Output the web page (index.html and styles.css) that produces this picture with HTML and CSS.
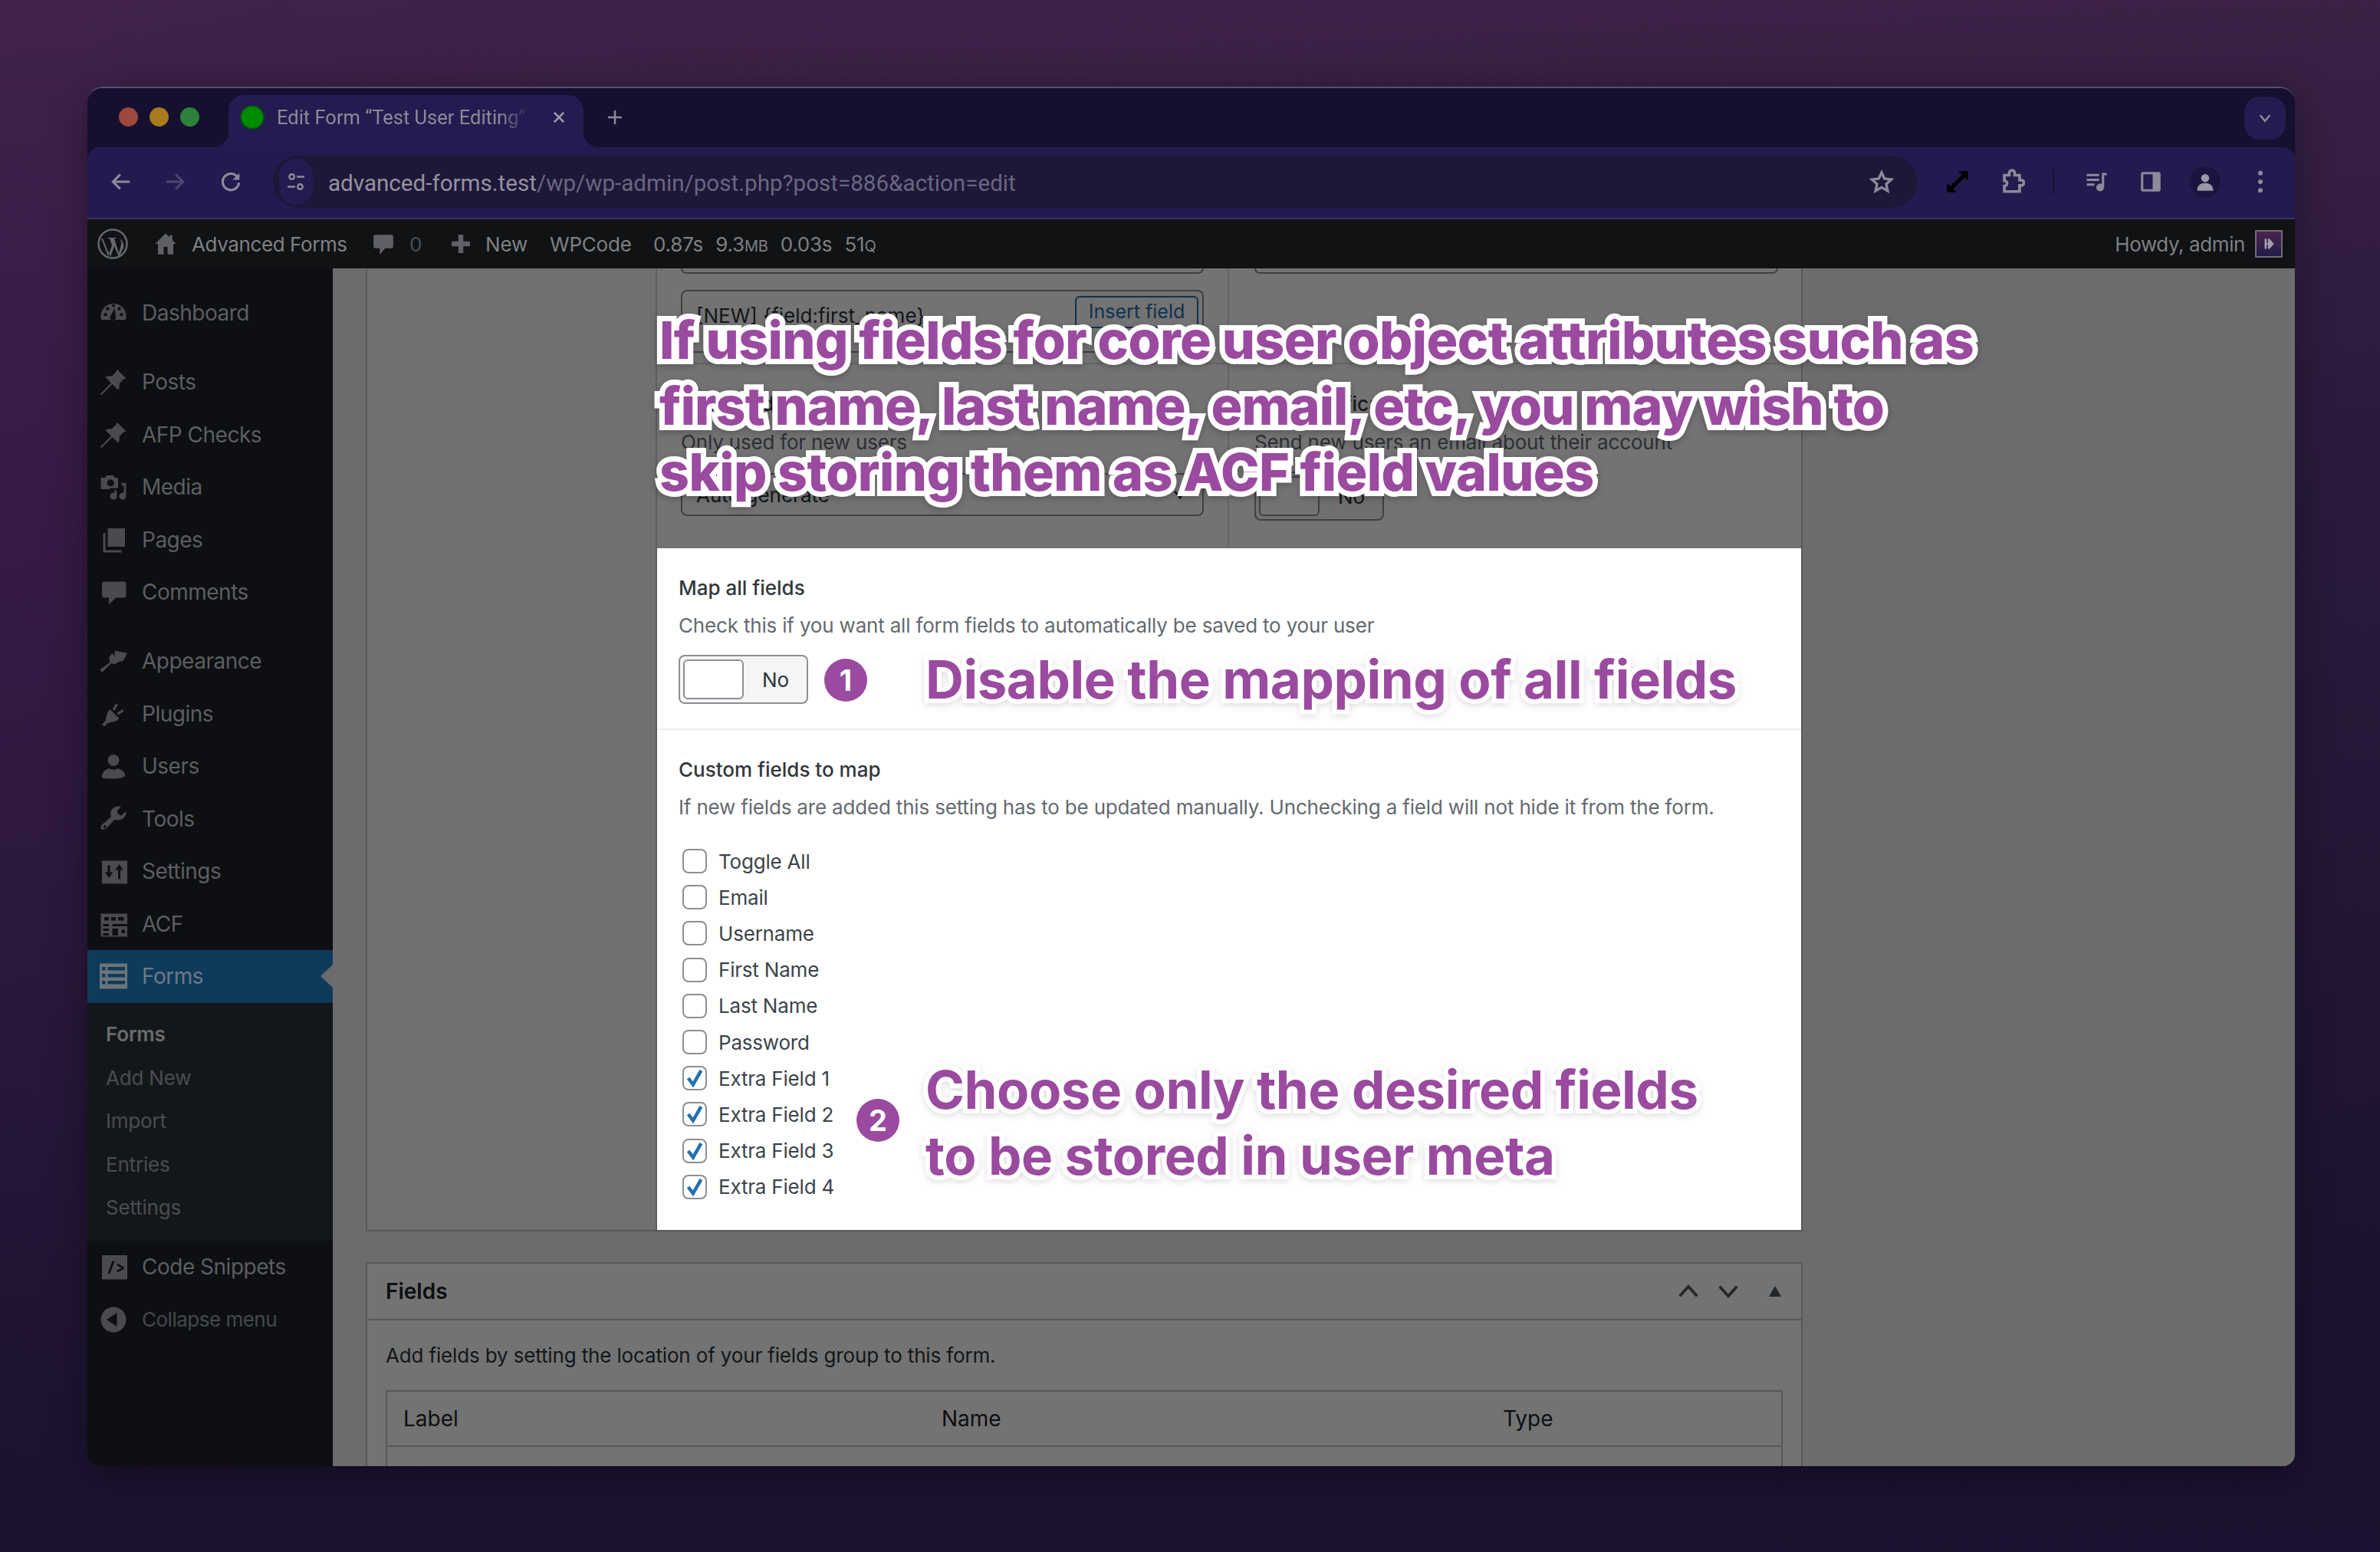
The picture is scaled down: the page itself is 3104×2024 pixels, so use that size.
FILE: index.html
```html
<!DOCTYPE html>
<html lang="en">
<head>
    <meta charset="UTF-8">
    <title>Edit Form "Test User Editing"</title>
    <link rel="stylesheet" href="styles.css">
</head>
<body>

<div class="window">

    <div class="tabstrip">
        <div class="lights">
            <span class="light red"></span>
            <span class="light yellow"></span>
            <span class="light green"></span>
        </div>
        <div class="tab">
            <span class="favicon"></span>
            <span class="tab-title">Edit Form “Test User Editing”</span>
            <svg class="tab-close" viewBox="0 0 16 16"><path d="M3 3l10 10M13 3L3 13"/></svg>
        </div>
        <svg class="new-tab" viewBox="0 0 24 24"><path d="M12 3v18M3 12h18"/></svg>
        <div class="tab-menu">
            <svg viewBox="0 0 16 16"><path d="M3 5l5 6 5-6"/></svg>
        </div>
    </div>

    <div class="toolbar">
        <svg class="tb-icon back" viewBox="0 0 24 24"><path d="M21 12H4M11 4.500L3.500 12l7.500 7.500"/></svg>
        <svg class="tb-icon forward" viewBox="0 0 24 24"><path d="M3 12h17M13 4.500l7.500 7.500-7.500 7.500"/></svg>
        <svg class="tb-icon reload" viewBox="0 0 24 24"><path d="M19.500 8A8.500 8.500 0 1 0 20.500 13"/><path class="solid" d="M21 3v7h-7z"/></svg>
        <div class="omnibox">
            <span class="tune">
                <svg viewBox="0 0 24 24"><circle cx="7" cy="6" r="3"/><path d="M13 6h9M2 18h9"/><circle cx="17" cy="18" r="3"/></svg>
            </span>
            <span class="url"><b>advanced-forms.test</b>/wp/wp-admin/post.php?post=886&amp;action=edit</span>
            <svg class="star" viewBox="0 0 24 24"><path d="M12 3l2.800 6 6.700.800-5 4.500 1.400 6.600L12 17.500 6.100 20.900l1.400-6.600-5-4.500 6.700-.800z"/></svg>
        </div>
        <svg class="tb-icon expand" viewBox="0 0 24 24"><path class="solid" d="M13 1h10v10l-3.500-3.500L7.500 19.500 11 23H1V13l3.500 3.500 12-12z"/></svg>
        <svg class="tb-icon puzzle" viewBox="0 0 24 24"><path d="M5 6h4.500V4a2.500 2.500 0 0 1 5 0v2H19v4.500h1.500a2.500 2.500 0 0 1 0 5H19V21H5v-5a2.500 2.500 0 0 0 0-5z"/></svg>
        <span class="tb-divider"></span>
        <svg class="tb-icon queue" viewBox="0 0 24 24"><path d="M2 5h13M2 10h13M2 15h8M19 18V4h4"/><circle class="solid" cx="16" cy="18" r="4"/></svg>
        <svg class="tb-icon panel" viewBox="0 0 24 24"><rect x="3" y="3" width="18" height="18" rx="1"/><path class="solid" d="M14 3h7v18h-7z"/></svg>
        <span class="avatar">
            <svg viewBox="0 0 24 24"><circle cx="12" cy="8" r="4.500"/><path d="M3 22c0-6 4-8.500 9-8.500s9 2.500 9 8.500z"/></svg>
        </span>
        <svg class="tb-icon kebab" viewBox="0 0 8 32"><circle cx="4" cy="4" r="3.200"/><circle cx="4" cy="16" r="3.200"/><circle cx="4" cy="28" r="3.200"/></svg>
    </div>

    <div class="adminbar">
        <svg class="wp-logo" viewBox="0 0 40 40">
            <circle cx="20" cy="20" r="18.500"/>
            <path class="wp-w" d="M5 13l9 23 5-14-3-9h-2v-1h11v1h-3l6 19 3-11c1-4-1-6-2-8 4 3 6 7 5 12l-6 12-6-14-5 14-10-24z"/>
        </svg>
        <svg class="ab-home" viewBox="0 0 24 24"><path d="M12 1L1 12h3v11h6v-8h4v8h6V12h3l-4-4V3h-3v2z"/></svg>
        <span class="ab-site">Advanced Forms</span>
        <svg class="ab-comment" viewBox="0 0 24 24"><path d="M3 2h18a2 2 0 0 1 2 2v11a2 2 0 0 1-2 2h-7l-6 7v-7H3a2 2 0 0 1-2-2V4a2 2 0 0 1 2-2z"/></svg>
        <span class="ab-count">0</span>
        <svg class="ab-plus" viewBox="0 0 24 24"><path d="M9 1h6v8h8v6h-8v8H9v-8H1V9h8z"/></svg>
        <span class="ab-new">New</span>
        <span class="ab-wpcode">WPCode</span>
        <span class="ab-stat first">0.87s</span>
        <span class="ab-stat">9.3<small>MB</small></span>
        <span class="ab-stat">0.03s</span>
        <span class="ab-stat">51<small>Q</small></span>
        <span class="ab-howdy">Howdy, admin</span>
        <span class="ab-avatar">
            <svg viewBox="0 0 20 20"><path d="M5 4h2.500v5H9V4l2 0 5 6-5 6H9v-5H7.500v5H5z"/></svg>
        </span>
    </div>

    <div class="wp-body">

        <nav class="sidebar">
            <a class="menu-item"><svg class="mi" viewBox="0 0 24 24"><path d="M12 4C5.400 4 1 9 1 15c0 1.200.200 2 .5 3h21c.3-1 .5-1.800.5-3 0-6-4.400-11-11-11zm-7 11a1.500 1.500 0 1 1 0-3 1.500 1.500 0 0 1 0 3zm2-5a1.500 1.500 0 1 1 0-3 1.500 1.500 0 0 1 0 3zm5-3a1.300 1.300 0 1 1 0-2.600A1.300 1.300 0 0 1 12 7zm2 9a2.500 2.500 0 0 1-5-.5L13 8zm3-6a1.500 1.500 0 1 1 0-3 1.500 1.500 0 0 1 0 3zm2 5a1.500 1.500 0 1 1 0-3 1.500 1.500 0 0 1 0 3z"/></svg>Dashboard</a>
            <span class="menu-sep"></span>
            <a class="menu-item"><svg class="mi" viewBox="0 0 24 24"><path d="M15 1l8 8-2 .5-4 4c.5 2.500 0 4-1 5.500L11 14 2 23l-1.500.5L1 22l9-9-5-5c1.500-1 3-1.500 5.500-1l4-4z"/></svg>Posts</a>
            <a class="menu-item"><svg class="mi" viewBox="0 0 24 24"><path d="M15 1l8 8-2 .5-4 4c.5 2.500 0 4-1 5.500L11 14 2 23l-1.500.5L1 22l9-9-5-5c1.500-1 3-1.500 5.500-1l4-4z"/></svg>AFP Checks</a>
            <a class="menu-item"><svg class="mi" viewBox="0 0 24 24"><path fill-rule="evenodd" d="M1 4h4l1-2h6l1 2h3v9H9.500a4 4 0 0 0-1 1H1zm8.500 1.500a3 3 0 1 0 0 6 3 3 0 0 0 0-6z"/><path d="M23 8.500V20a3 3 0 1 1-2-2.800V11h-2V8.500zM15 16v4a3 3 0 1 1-2-2.800V14z"/></svg>Media</a>
            <a class="menu-item"><svg class="mi" viewBox="0 0 24 24"><path d="M7 2h15v16H7z"/><path d="M3 6h2v15h14v2H3z"/></svg>Pages</a>
            <a class="menu-item"><svg class="mi" viewBox="0 0 24 24"><path d="M4 3h17a2 2 0 0 1 2 2v10a2 2 0 0 1-2 2h-7l-6 6v-6H4a2 2 0 0 1-2-2V5a2 2 0 0 1 2-2z"/></svg>Comments</a>
            <span class="menu-sep"></span>
            <a class="menu-item"><svg class="mi" viewBox="0 0 24 24"><path d="M13 3c3 .5 7 1.500 11 2-1 2-2 5-4 7-3 1-6 .5-7 .5z"/><path d="M11 5l5 8-3 2-3-1-7 7c-1.500 1-3-.5-2-2l8-6-1-4z"/></svg>Appearance</a>
            <a class="menu-item"><svg class="mi" viewBox="0 0 24 24"><path d="M9 8l8 8c-2 2-4 3-6 3l-4 1-3 3-2-2 3-3 1-4c0-2 1-4 3-6z"/><path d="M14 3l2 1-3 5-2-1zM20 8l1 2-5 3-1-2z"/></svg>Plugins</a>
            <a class="menu-item"><svg class="mi" viewBox="0 0 24 24"><circle cx="12" cy="7" r="5"/><path d="M2 22c0-5 3-7 6-8 2 1.500 6 1.500 8 0 3 1 6 3 6 6 0 2-5 3-10 3S2 23 2 22z"/></svg>Users</a>
            <a class="menu-item"><svg class="mi" viewBox="0 0 24 24"><path fill-rule="evenodd" d="M23 6c0 4-3 7-7 7-1 0-2 0-3-.5L6 20c-1.500 1.500-5 2-5 0 0-1 0-2 1-3l8-7c-.5-1-.5-2-.5-3 0-3 3-6 7-6l2 .5L15 5l1 3 3 1 3.500-3.500zM4.500 17.500a1.300 1.300 0 1 0 0 2.600 1.300 1.300 0 0 0 0-2.600z"/></svg>Tools</a>
            <a class="menu-item"><svg class="mi" viewBox="0 0 24 24"><path fill-rule="evenodd" d="M2 3h22v20H2zM7 7v6H4.500l3.500 5 3.500-5H9V7zm9 12h2V11h2.500L17 6l-3.500 5H16z"/></svg>Settings</a>
            <a class="menu-item"><svg class="mi" viewBox="0 0 24 24"><path fill-rule="evenodd" d="M1 3h23v20H1zm3 3v3h4V6zm6 0v3h4V6zm6 0v3h5V6zM3 12v2h5v-2zm0 4v2h5v-2zm8-4v2h13v-2zm0 4v6h5v-6zm8 1v3h3v-3zM3 20v2h5v-2z"/></svg>ACF</a>
            <a class="menu-item active"><svg class="mi" viewBox="0 0 24 24"><path fill-rule="evenodd" d="M0 1h24v22H0zm2 3v3h3V4zm5 0v3h15V4zM2 10v3h3v-3zm5 0v3h15v-3zM2 16v3h3v-3zm5 0v3h15v-3z"/></svg>Forms<span class="menu-arrow"></span></a>
            <div class="submenu">
                <a class="sub-item current">Forms</a>
                <a class="sub-item">Add New</a>
                <a class="sub-item">Import</a>
                <a class="sub-item">Entries</a>
                <a class="sub-item">Settings</a>
            </div>
            <a class="menu-item snippets"><svg class="mi" viewBox="0 0 24 24"><path fill-rule="evenodd" d="M2 2h22v21H2zm9 5L7 18h2l4-11zm4 2v2l4 2-4 2v2l6-3v-2z"/></svg>Code Snippets</a>
            <a class="menu-item collapse"><svg class="mi" viewBox="0 0 24 24"><path fill-rule="evenodd" d="M12 1a11 11 0 1 1 0 22 11 11 0 0 1 0-22zm3 5l-9 6 9 6z"/></svg>Collapse menu</a>
        </nav>

        <main class="main">
            <div class="dim"></div>

            <section class="postbox settings-box">
                <div class="tabs-col"></div>
                <div class="fields-col">
                    <div class="field-row first-row">
                        <div class="cell">
                            <div class="input clipped"></div>
                            <div class="input subject">
                                <span>[NEW] {field:first_name}</span>
                                <span class="insert-btn">Insert field</span>
                            </div>
                        </div>
                        <div class="cell">
                            <div class="input clipped"></div>
                        </div>
                    </div>
                    <div class="field-row second-row">
                        <div class="cell">
                            <div class="f-label">Password</div>
                            <div class="f-desc">Only used for new users</div>
                            <div class="input select">
                                <span>Auto generate</span>
                                <svg class="select-arrow" viewBox="0 0 16 16"><path d="M3 5l5 6 5-6"/></svg>
                            </div>
                        </div>
                        <div class="cell">
                            <div class="f-label">Send notification</div>
                            <div class="f-desc">Send new users an email about their account</div>
                            <div class="toggle">
                                <span class="knob"></span>
                                <span class="toggle-text">No</span>
                            </div>
                        </div>
                    </div>

                    <div class="highlight">
                        <div class="hl-section map-all">
                            <div class="f-label">Map all fields</div>
                            <div class="f-desc">Check this if you want all form fields to automatically be saved to your user</div>
                            <div class="toggle">
                                <span class="knob"></span>
                                <span class="toggle-text">No</span>
                            </div>
                        </div>
                        <div class="hl-section custom-fields">
                            <div class="f-label">Custom fields to map</div>
                            <div class="f-desc">If new fields are added this setting has to be updated manually. Unchecking a field will not hide it from the form.</div>
                            <ul class="checks">
                                <li><span class="cb"></span>Toggle All</li>
                                <li><span class="cb"></span>Email</li>
                                <li><span class="cb"></span>Username</li>
                                <li><span class="cb"></span>First Name</li>
                                <li><span class="cb"></span>Last Name</li>
                                <li><span class="cb"></span>Password</li>
                                <li><span class="cb on"><svg viewBox="0 0 20 20"><path d="M4 10l4.500 6L16 3"/></svg></span>Extra Field 1</li>
                                <li><span class="cb on"><svg viewBox="0 0 20 20"><path d="M4 10l4.500 6L16 3"/></svg></span>Extra Field 2</li>
                                <li><span class="cb on"><svg viewBox="0 0 20 20"><path d="M4 10l4.500 6L16 3"/></svg></span>Extra Field 3</li>
                                <li><span class="cb on"><svg viewBox="0 0 20 20"><path d="M4 10l4.500 6L16 3"/></svg></span>Extra Field 4</li>
                            </ul>
                        </div>
                    </div>
                </div>
            </section>

            <section class="postbox fields-box">
                <div class="fb-head">
                    <span class="fb-title">Fields</span>
                    <svg class="fb-chev" viewBox="0 0 24 24"><path d="M3 17l9-10 9 10"/></svg>
                    <svg class="fb-chev" viewBox="0 0 24 24"><path d="M3 7l9 10 9-10"/></svg>
                    <span class="fb-tri"></span>
                </div>
                <div class="fb-body">
                    <p class="fb-note">Add fields by setting the location of your fields group to this form.</p>
                    <div class="fb-table">
                        <div class="fb-row">
                            <span class="col-label">Label</span>
                            <span class="col-name">Name</span>
                            <span class="col-type">Type</span>
                        </div>
                    </div>
                </div>
            </section>
        </main>
    </div>

    <!-- annotations drawn on top of the screenshot -->
    <div class="note note-top">If using fields for core user object attributes such as<br><span class="tight">first name, last name, email, etc, you may wish to</span><br>skip storing them as ACF field values</div>
    <div class="note note-one">Disable the mapping of all fields</div>
    <div class="note note-two">Choose only the desired fields<br>to be stored in user meta</div>
    <span class="step step-one">1</span>
    <span class="step step-two">2</span>
</div>

</body>
</html>
```
FILE: styles.css
```css
* {
    box-sizing: border-box;
}

html, body {
    margin: 0;
    height: 2024px;
    overflow: hidden;
}

body {
    padding: 113px 111px 112px 114px;
    background:
        radial-gradient(900px 1400px at 0 30%, rgba(80, 30, 90, .3), transparent),
        linear-gradient(178deg, #3d2347 0%, #2c1a3d 30%, #1d1330 80%, #1a1230 100%);
    font-family: "Inter", "Liberation Sans", sans-serif;
    font-size: 26px;
    color: #2c3338;
}

svg {
    display: block;
    flex: none;
}

.window {
    position: relative;
    height: 1799px;
    display: flex;
    flex-direction: column;
    border-radius: 20px 20px 16px 16px;
    overflow: hidden;
    background: #151030;
    box-shadow: 0 10px 50px rgba(0, 0, 0, .35);
    border-top: 2px solid #57506e;
}

/* tab strip */
.tabstrip {
    height: 77px;
    flex: none;
    display: flex;
    align-items: flex-end;
    background: #151030;
    position: relative;
}

.lights {
    display: flex;
    gap: 15px;
    width: 184px;
    padding: 0 0 27px 41px;
}

.light {
    width: 25px;
    height: 25px;
    border-radius: 50%;
}

.red { background: #a0483c; }
.yellow { background: #a67c1f; }
.green { background: #2c8238; }

.tab {
    width: 463px;
    height: 68px;
    background: #241c50;
    border-radius: 20px 20px 0 0;
    display: flex;
    align-items: center;
    padding: 0 0 10px 17px;
    position: relative;
    color: #8d8a99;
    font-family: "Roboto", sans-serif;
}

.tab::before, .tab::after {
    content: "";
    position: absolute;
    bottom: 0;
    width: 20px;
    height: 20px;
}

.tab::before {
    left: -20px;
    background: radial-gradient(circle at 0 0, transparent 20px, #241c50 20.5px);
}

.tab::after {
    right: -20px;
    background: radial-gradient(circle at 100% 0, transparent 20px, #241c50 20.5px);
}

.favicon {
    width: 28px;
    height: 28px;
    border-radius: 50%;
    background: #008c00;
    box-shadow: 0 0 0 2px #0c4a1a;
}

.tab-title {
    margin-left: 18px;
    font-size: 25.500px;
    width: 330px;
    white-space: nowrap;
    overflow: hidden;
    -webkit-mask-image: linear-gradient(90deg, #000 88%, transparent);
}

.tab-close {
    width: 20px;
    height: 20px;
    margin-left: 28px;
    fill: none;
    stroke: #9a97a6;
    stroke-width: 2;
}

.new-tab {
    width: 24px;
    height: 24px;
    margin: 0 0 27px 29px;
    fill: none;
    stroke: #8d8a99;
    stroke-width: 2.500;
}

.tab-menu {
    margin: 0 12px 10px auto;
    width: 54px;
    height: 56px;
    border-radius: 20px;
    background: #241c50;
    display: flex;
    align-items: center;
    justify-content: center;
}

.tab-menu svg {
    width: 20px;
    height: 20px;
    fill: none;
    stroke: #8d8a99;
    stroke-width: 2;
}

/* toolbar */
.toolbar {
    height: 94px;
    flex: none;
    display: flex;
    align-items: center;
    background: #231b4f;
    border-radius: 16px 16px 0 0;
    border-bottom: 2px solid #3c3660;
    padding: 0 0 2px 29px;
}

.tb-icon {
    width: 30px;
    height: 30px;
    fill: none;
    stroke: #8d8a99;
    stroke-width: 2.500;
}

.tb-icon .solid {
    fill: #8d8a99;
    stroke: none;
}

.back { margin-right: 40px; }
.forward { margin-right: 43px; stroke: #4c4672; }
.reload { margin-right: 40px; }

.omnibox {
    width: 2144px;
    height: 68px;
    border-radius: 34px;
    background: #1d1738;
    display: flex;
    align-items: center;
    padding: 0 30px 0 8px;
    margin-right: 38px;
}

.tune {
    width: 44px;
    height: 60px;
    border-radius: 22px;
    background: #241c50;
    display: flex;
    align-items: center;
    justify-content: center;
}

.tune svg {
    width: 26px;
    height: 26px;
    fill: none;
    stroke: #8d8a99;
    stroke-width: 2.200;
}

.url {
    margin-left: 20px;
    padding-top: 3px;
    font-family: "Roboto", sans-serif;
    font-size: 29.600px;
    color: #6a6680;
    white-space: nowrap;
}

.url b {
    font-weight: 400;
    color: #95929f;
}

.star {
    width: 32px;
    height: 32px;
    margin-left: auto;
    fill: none;
    stroke: #8d8a99;
    stroke-width: 2.500;
}

.expand { margin-right: 39px; }
.expand .solid { fill: #000; }
.puzzle { width: 34px; height: 34px; margin-right: 36px; stroke-width: 2.600; }

.tb-divider {
    width: 2px;
    height: 32px;
    background: #151030;
    margin-right: 40px;
}

.queue { margin-right: 41px; }
.panel { margin-right: 36px; }

.avatar {
    width: 40px;
    height: 40px;
    border-radius: 50%;
    background: #1a1440;
    display: flex;
    align-items: center;
    justify-content: center;
    margin-right: 48px;
}

.avatar svg {
    width: 28px;
    height: 28px;
    fill: #9a98a4;
}

.kebab {
    width: 8px;
    height: 30px;
    fill: #8d8a99;
    stroke: none;
}

/* admin bar */
.adminbar {
    height: 64px;
    flex: none;
    display: flex;
    align-items: center;
    background: #101214;
    color: #7f8083;
    font-size: 26px;
    padding-left: 13px;
    white-space: nowrap;
    letter-spacing: -.2px;
}

.wp-logo {
    width: 40px;
    height: 40px;
    margin-right: 34px;
}

.wp-logo circle {
    fill: none;
    stroke: #66686b;
    stroke-width: 2.500;
}

.wp-w {
    fill: #66686b;
}

.ab-home {
    width: 30px;
    height: 30px;
    fill: #5f6164;
    margin-right: 19px;
}

.ab-site { width: 236px; letter-spacing: -.4px; }

.ab-comment {
    width: 28px;
    height: 30px;
    fill: #5f6164;
}

.ab-count {
    margin-left: 20px;
    color: #4d4f52;
    width: 37px;
}

.ab-plus {
    width: 26px;
    height: 26px;
    fill: #5f6164;
    margin-left: 17px;
    margin-right: 19px;
}

.ab-new { width: 84px; }
.ab-wpcode { width: 135px; }
.ab-stat { margin-right: 16px; }
.ab-stat small { font-size: 20px; }

.ab-howdy {
    margin-left: auto;
    margin-right: 13px;
    letter-spacing: -.4px;
}

.ab-avatar {
    width: 36px;
    height: 36px;
    margin-right: 16px;
    background: linear-gradient(180deg, #4a2450, #241c4a);
    border: 2px solid #6e6a78;
    display: flex;
    align-items: center;
    justify-content: center;
}

.ab-avatar svg {
    width: 22px;
    height: 22px;
    fill: #a59cab;
}

/* wp layout */
.wp-body {
    flex: 1;
    min-height: 0;
    display: flex;
}

.sidebar {
    width: 320px;
    flex: none;
    background: #0d0f12;
    padding-top: 24px;
    color: #5d5e61;
    font-size: 28px;
    letter-spacing: -.5px;
}

.menu-item {
    height: 68.500px;
    display: flex;
    align-items: center;
    padding-left: 16px;
    position: relative;
}

.mi {
    width: 36px;
    height: 36px;
    fill: #4a4b4e;
    margin-right: 19px;
}

.menu-sep {
    display: block;
    height: 21.500px;
}

.menu-item.active {
    background: #0e3a5c;
    color: #6c7a86;
}

.menu-item.active .mi { fill: #6c7479; }

.menu-arrow {
    position: absolute;
    right: 0;
    top: 19px;
    border: 15px solid transparent;
    border-left: 0;
    border-right: 16px solid #6b6b6b;
}

.submenu {
    background: #14171a;
    padding: 13px 0 15px;
    margin-bottom: 0;
    color: #4a4d50;
    font-size: 26px;
}

.sub-item {
    display: flex;
    align-items: center;
    height: 56.500px;
    padding-left: 24px;
    letter-spacing: -.2px;
}

.sub-item.current {
    font-weight: 600;
    color: #6b6b6b;
}

.menu-item.collapse {
    color: #47494c;
    font-size: 26px;
}

.main {
    flex: 1;
    min-width: 0;
    position: relative;
    overflow: hidden;
    background: #f0f0f1;
    padding-left: 43px;
    width: 2560px;
}

.dim {
    position: absolute;
    inset: 0;
    z-index: 1;
    background: rgba(0, 0, 0, .55);
}

.postbox {
    width: 1874px;
    background: #fff;
    border: 2px solid #c3c4c7;
}

/* form settings box */
.settings-box {
    border-top: 0;
    height: 1256px;
    display: flex;
}

.tabs-col {
    width: 376px;
    flex: none;
    background: #f9f9f9;
}

.fields-col {
    flex: 1;
    min-width: 0;
    border-left: 2px solid #d0d0d2;
}

.field-row {
    display: flex;
    border-bottom: 2px solid #e1e1e3;
}

.first-row { height: 125px; }
.second-row { height: 240px; border-bottom: 0; }

.cell {
    width: 746px;
    flex: none;
    padding: 0 31px 0 31px;
    border-right: 2px solid #e1e1e3;
}

.cell + .cell {
    flex: 1;
    padding-right: 30px;
    padding-left: 33px;
    border-right: 0;
}

.input {
    border: 2px solid #8c8f94;
    border-radius: 8px;
    background: #fff;
    color: #2c3338;
    display: flex;
    align-items: center;
    justify-content: space-between;
    padding-left: 18px;
}

.input.clipped {
    height: 7px;
    border-top: 0;
    border-radius: 0 0 8px 8px;
}

.subject {
    height: 82px;
    margin-top: 21px;
    padding-right: 5px;
    padding-bottom: 16px;
}

.insert-btn {
    width: 161px;
    height: 42px;
    border: 2px solid #2271b1;
    border-radius: 6px;
    color: #2271b1;
    text-align: center;
    line-height: 36px;
    font-size: 25px;
    align-self: flex-start;
    margin-top: 6px;
}

.f-label {
    font-weight: 500;
    line-height: 32px;
    color: #32373c;
}

.f-desc {
    color: #646970;
    line-height: 32px;
    letter-spacing: -.18px;
    white-space: nowrap;
}

.second-row .cell {
    padding-top: 36px;
}

.second-row .f-desc {
    margin-top: 18px;
}

.select {
    margin-top: 24px;
    height: 56px;
    padding-right: 18px;
}

.select-arrow {
    width: 22px;
    height: 22px;
    fill: none;
    stroke: #2c3338;
    stroke-width: 2;
}

.toggle {
    width: 169px;
    height: 64px;
    margin-top: 22px;
    border: 2px solid #8c8f94;
    border-radius: 8px;
    background: #f5f5f5;
    display: flex;
    align-items: center;
    padding-left: 4px;
}

.knob {
    width: 79px;
    height: 52px;
    background: #fff;
    border: 2px solid #8c8f94;
    border-radius: 6px;
}

.toggle-text {
    margin-left: 24px;
}

/* highlighted settings */
.highlight {
    position: relative;
    z-index: 2;
    background: #fff;
    height: 889px;
}

.hl-section {
    padding: 36px 28px 0 28px;
}

.map-all {
    height: 237px;
    border-bottom: 2px solid #ececec;
}

.map-all .f-desc,
.custom-fields .f-desc {
    margin-top: 17px;
}

.map-all .toggle {
    margin-top: 22px;
}

.custom-fields {
    padding-top: 36px;
}

.checks {
    list-style: none;
    margin: 38px 0 0;
    padding: 0 0 0 5px;
}

.checks li {
    height: 47.200px;
    display: flex;
    align-items: center;
    padding-bottom: 15px;
    color: #3c434a;
    letter-spacing: -.2px;
}

.cb {
    width: 32px;
    height: 32px;
    flex: none;
    margin-right: 15px;
    border: 2px solid #8c8f94;
    border-radius: 8px;
    background: #fff;
}

.cb svg {
    width: 28px;
    height: 28px;
    fill: none;
    stroke: #2271b1;
    stroke-width: 3.200;
}

/* fields box */
.fields-box {
    margin-top: 40px;
    height: 400px;
}

.fb-head {
    height: 74px;
    display: flex;
    align-items: center;
    padding: 0 20px 0 24px;
    border-bottom: 2px solid #c3c4c7;
}

.fb-title {
    font-weight: 600;
    font-size: 28px;
    color: #1d2327;
    margin-right: auto;
}

.fb-chev {
    width: 30px;
    height: 30px;
    margin-right: 22px;
    fill: none;
    stroke: #50575e;
    stroke-width: 3;
}

.fb-tri {
    border: 8px solid transparent;
    border-top: 0;
    border-bottom: 14px solid #50575e;
    margin-left: 16px;
    margin-right: 6px;
}

.fb-body {
    padding: 0 24px 0 24px;
}

.fb-note {
    margin: 30px 0 0;
    line-height: 32px;
    color: #2c3338;
    letter-spacing: -.15px;
}

.fb-table {
    margin-top: 29px;
    border: 2px solid #c3c4c7;
    height: 200px;
}

.fb-row {
    height: 72px;
    display: flex;
    align-items: center;
    border-bottom: 2px solid #c3c4c7;
    padding-left: 21px;
    font-size: 28px;
    color: #1d2327;
}

.col-label { width: 702px; }
.col-name { width: 732px; }

/* annotations */
.note {
    position: absolute;
    z-index: 5;
    color: #9a4a9f;
    font-weight: 700;
    white-space: nowrap;
    line-height: 86px;
    font-size: 69px;
    letter-spacing: -.45px;
    -webkit-text-stroke: 12px #fff;
    paint-order: stroke fill;
    filter: drop-shadow(0 3px 4px rgba(0, 0, 0, .12));
}

.note-top {
    left: 746px;
    top: 285px;
    font-size: 68px;
    font-weight: 800;
    letter-spacing: -.55px;
    -webkit-text-stroke: 14px #fff;
    filter: drop-shadow(0 3px 4px rgba(0, 0, 0, .22));
}

.tight {
    letter-spacing: -.95px;
}

.note-one {
    left: 1093px;
    top: 728px;
}

.note-two {
    left: 1093px;
    top: 1263px;
}

.step {
    position: absolute;
    z-index: 5;
    width: 56px;
    height: 56px;
    border-radius: 50%;
    background: #9a4a9f;
    color: #fff;
    font-weight: 700;
    font-size: 38px;
    display: flex;
    align-items: center;
    justify-content: center;
}

.step-one {
    left: 961px;
    top: 744px;
}

.step-two {
    left: 1003px;
    top: 1318px;
}
```
